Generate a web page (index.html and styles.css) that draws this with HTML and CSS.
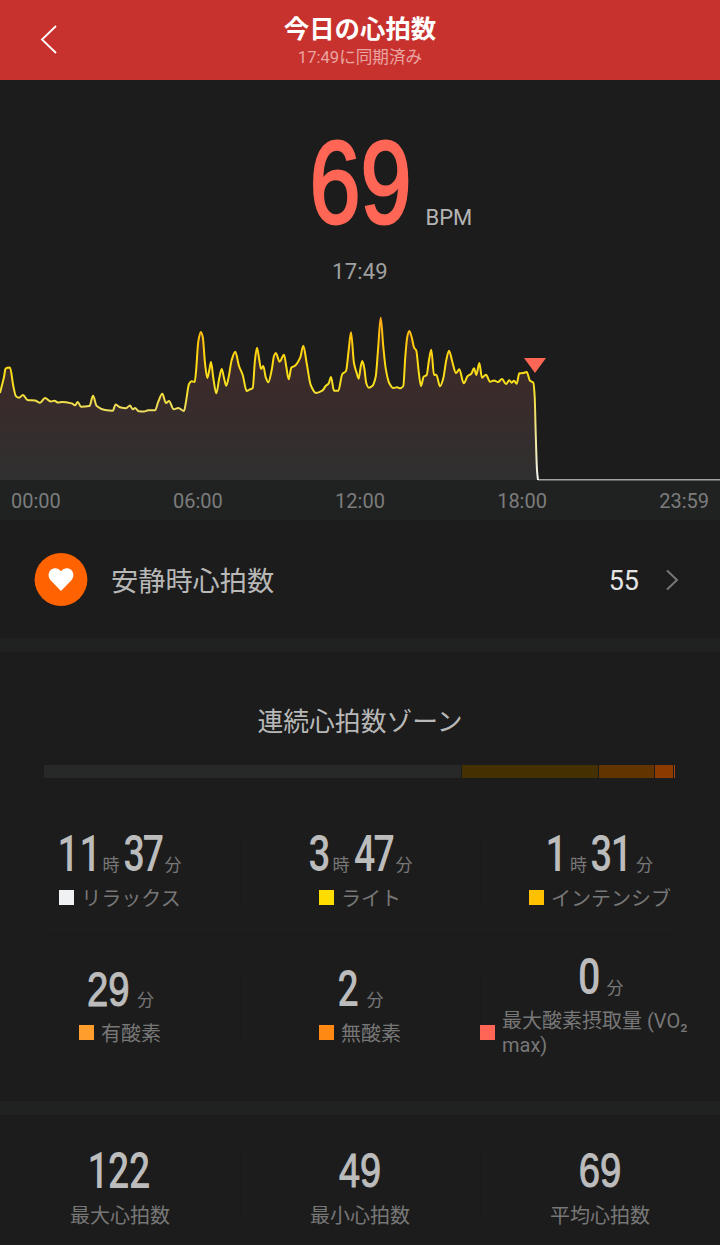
FILE: index.html
```html
<!DOCTYPE html>
<html lang="ja">
<head>
<meta charset="utf-8">
<title>今日の心拍数</title>
<link rel="stylesheet" href="styles.css">
</head>
<body>
<header class="topbar">
  <svg class="back" width="18" height="30" viewBox="0 0 18 30"><path d="M16 2 2 15.5 16 29"/></svg>
  <div class="heading">
    <h1>今日の心拍数</h1>
    <p>17:49に同期済み</p>
  </div>
</header>

<section class="current">
  <div class="reading">
    <svg class="num round" width="100" height="87"><text transform="translate(-1.5 85.2) scale(.785 1)">69</text></svg>
    <span class="bpm">BPM</span>
  </div>
  <div class="read-time">17:49</div>
  <svg class="chart" width="720" height="180" viewBox="0 301 720 180">
    <defs>
      <linearGradient id="line" gradientUnits="userSpaceOnUse" x1="0" y1="317" x2="0" y2="480">
        <stop offset="0" stop-color="#ffa51c"/><stop offset=".13" stop-color="#ffc60c"/>
        <stop offset=".25" stop-color="#ffd910"/><stop offset=".42" stop-color="#f6df20"/>
        <stop offset=".58" stop-color="#eddd62"/><stop offset="1" stop-color="#f4f4f4"/>
      </linearGradient>
      <linearGradient id="area" gradientUnits="userSpaceOnUse" x1="0" y1="320" x2="0" y2="480">
        <stop offset="0" stop-color="#422a2a"/><stop offset=".5" stop-color="#392b2b"/><stop offset="1" stop-color="#303030"/>
      </linearGradient>
    </defs>
    <path id="areaPath" fill="url(#area)"/>
    <path d="M538 479.7H720" stroke="#a2a3a3" stroke-width="1.6"/>
    <path id="linePath" fill="none" stroke="url(#line)" stroke-width="2" stroke-linejoin="round"/>
    <path d="M524 358h22l-11 15z" fill="#ff6655"/>
  </svg>
</section>
<div class="axis"><span>00:00</span><span>06:00</span><span>12:00</span><span>18:00</span><span>23:59</span></div>

<section class="resting">
  <svg width="54" height="54" viewBox="0 0 54 54"><circle cx="27" cy="26.5" r="26.4" fill="#ff6200"/><path d="M27 38 16.8 27.4C13.7 24.2 14 19.2 17 16.7c3-2.4 7.300-2 10 1.600 2.700-3.600 7-4 10-1.600 3 2.500 3.300 7.500.2 10.700z" fill="#fff"/></svg>
  <span class="resting-label">安静時心拍数</span>
  <span class="resting-value">55</span>
  <svg class="more" width="14" height="22" viewBox="0 0 14 22"><path d="M2 1.500 12 11 2 20.500"/></svg>
</section>

<section class="zones">
  <h2>連続心拍数ゾーン</h2>
  <div class="bar"><i class="b1"></i><i class="b2"></i><i class="b3"></i><i class="b4"></i><i class="b5"></i></div>
  <div class="grid first">
    <div class="cell">
      <div class="time"><svg class="num" width="44" height="36"><text x="0 29.3" transform="translate(-1.500 36) scale(.75 1)">11</text></svg><span>時</span><svg class="num next" width="42" height="36"><text x="0 26" transform="translate(.5 36) scale(.74 1)">37</text></svg><span>分</span></div>
      <div class="label"><i class="relax"></i><span>リラックス</span></div>
    </div>
    <div class="cell">
      <div class="time"><svg class="num" width="25" height="36"><text transform="translate(.5 36) scale(.76 1)">3</text></svg><span>時</span><svg class="num next" width="43" height="36"><text x="0 26.5" transform="translate(1 36) scale(.74 1)">47</text></svg><span>分</span></div>
      <div class="label"><i class="light"></i><span>ライト</span></div>
    </div>
    <div class="cell">
      <div class="time"><svg class="num" width="23" height="36"><text transform="translate(-1.500 36) scale(.75 1)">1</text></svg><span>時</span><svg class="num next" width="46" height="36"><text x="0 27" transform="translate(.5 36) scale(.75 1)">31</text></svg><span>分</span></div>
      <div class="label"><i class="intense"></i><span>インテンシブ</span></div>
    </div>
  </div>
  <div class="rule"></div>
  <div class="grid second">
    <div class="cell">
      <div class="time"><svg class="num round" width="51" height="36"><text transform="translate(1 35.500) scale(.78 1)">29</text></svg><span>分</span></div>
      <div class="label"><i class="aerobic"></i><span>有酸素</span></div>
    </div>
    <div class="cell">
      <div class="time"><svg class="num" width="30" height="36"><text transform="translate(.5 36) scale(.74 1)">2</text></svg><span>分</span></div>
      <div class="label"><i class="anaerobic"></i><span>無酸素</span></div>
    </div>
    <div class="cell">
      <div class="time"><svg class="num" width="30" height="36"><text transform="translate(1 36) scale(.78 1)">0</text></svg><span>分</span></div>
      <div class="label wide"><i class="vo2"></i><span>最大酸素摂取量 (VO₂<br>max)</span></div>
    </div>
  </div>
</section>

<section class="stats">
  <div><svg class="num" width="60" height="36"><text x="0 28 56.300" transform="translate(-2.600 35.500) scale(.74 1)">122</text></svg><span>最大心拍数</span></div>
  <div><svg class="num round" width="42" height="36"><text transform="translate(0 34.800) scale(.77 1)">49</text></svg><span>最小心拍数</span></div>
  <div><svg class="num round" width="42" height="36"><text transform="translate(-.3 34.800) scale(.78 1)">69</text></svg><span>平均心拍数</span></div>
</section>
<script src="chart.js"></script>
</body>
</html>
```
FILE: styles.css
```css
* { box-sizing: border-box; }
body {
  margin: 0;
  width: 720px;
  background: #1c1c1c;
  color: #b8b8b8;
  font-family: Roboto, "Noto Sans CJK JP", sans-serif;
}
h1, h2, p { margin: 0; }
svg { display: block; flex: none; }

.topbar {
  height: 80px;
  background: #c8322e;
  display: grid;
  grid-template-columns: 40px 1fr 40px;
  color: #fff;
}
.back { justify-self: end; margin: 24px -18px 0 0; fill: none; stroke: #fff; stroke-width: 1.8; }
.heading { text-align: center; padding-top: 13px; }
.heading h1 { font-size: 25.4px; line-height: 32px; font-weight: 700; }
.heading p { font-size: 16.6px; line-height: 24px; color: #eaa5a2; margin-top: 1px; }

.num { overflow: visible; fill: #bcbcbc; font-size: 50.6px; font-weight: 500; }
.num.round {
  stroke: #bcbcbc;
  stroke-width: 1.1;
  font-family: "Liberation Sans", Arial, sans-serif;
  font-size: 49px;
  font-weight: 400;
}

.current { height: 400px; display: flex; flex-direction: column; }
.reading {
  display: flex;
  align-items: baseline;
  margin: 58px 0 0 311px;
  height: 88px;
}
.reading .num.round { fill: #ff6655; stroke: #ff6655; stroke-width: 2.8; font-size: 117px; }
.bpm { font-size: 22px; line-height: 26px; margin-left: 14.5px; color: #b4b4b4; }
.read-time { margin-top: 32px; text-align: center; font-size: 22px; line-height: 28px; color: #a0a0a0; letter-spacing: .2px; }
.chart { margin-top: 15px; }

.axis {
  height: 40px;
  padding: 1px 11px 0;
  background: #202222;
  color: #7c7c7c;
  font-size: 20px;
  display: flex;
  justify-content: space-between;
  align-items: center;
}

.resting { height: 118px; padding: 1px 41px 0 34px; display: flex; align-items: center; }
.resting-label { font-size: 27.2px; margin-left: 23px; line-height: 36px; padding-top: 4px; }
.resting-value { font-size: 27px; margin-left: auto; color: #e4e4e4; padding-top: 3px; }
.more { margin-left: 26px; fill: none; stroke: #777; stroke-width: 2; }

.zones { height: 477px; border-top: 14px solid #202222; border-bottom: 14px solid #202222; }
.zones h2 { margin-top: 52px; text-align: center; font-size: 25.8px; line-height: 36px; font-weight: 400; }
.bar { display: grid; grid-template-columns: 417px 136px 55px 18px 1px; gap: 1px; width: 631px; height: 13px; margin: 25px 0 0 44px; }
.b1 { background: #262928; }
.b2 { background: #443000; }
.b3 { background: #623500; }
.b4 { background: #8c3a00; }
.b5 { background: #aa4310; }
.grid { display: grid; grid-template-columns: repeat(3, 240px); align-items: center; }
.first { height: 83px; margin-top: 53px; }
.second { height: 130px; margin-top: 7px; }
.rule { height: 1px; margin: 20px 48px 0; background: #191919; }
.cell { display: flex; flex-direction: column; align-items: center; }
.cell + .cell { background: linear-gradient(#191919, #191919) left center / 1px 64px no-repeat; }
.time { display: flex; align-items: baseline; height: 39px; }
.time span { font-size: 17px; line-height: 20px; color: #777; }
.time .next { margin-left: 3px; }
.label { display: flex; align-items: center; gap: 7px; margin-top: 12px; font-size: 20px; line-height: 24px; color: #777; }
.label i { width: 15px; height: 15px; flex: none; }
.label span { padding-top: 1px; margin-bottom: -1px; }
.wide { align-self: stretch; }
.wide span { padding-top: 0; margin-bottom: 0; }
.first .label i { margin-bottom: 2px; }
.relax { background: #f0f1f2; }
.light { background: #ffdc00; }
.intense { background: #ffc000; }
.aerobic { background: #ff9e2c; }
.anaerobic { background: #ff8912; }
.vo2 { background: #ff6655; }

.stats { height: 130px; display: grid; grid-template-columns: repeat(3, 240px); padding-top: 37px; }
.stats div { display: flex; flex-direction: column; align-items: center; height: 66px; }
.stats div + div { background: linear-gradient(#191919, #191919) left center / 1px 64px no-repeat; }
.stats span { font-size: 20px; line-height: 24px; margin-top: 16px; color: #777; }
```
FILE: chart.js
```js
// Heart-rate samples as x,y pairs in chart coordinates.
const samples = `0,393 4,377 5.5,369 7.3,367.8 10,367.5 13.3,386 16,396.3 19,397.7 23,395 27.5,400 35,400.5 40,402.7 45,398
50.7,401.5 54.5,400.7 58,402.6 62,402 71.7,403.4 75,405.3 77.7,402 81,406.7 89.5,406 93,395.8 96.7,406 105,410 112.7,410.8
115.7,404.5 120,407.3 126,408.3 130,405.5 132.7,409.3 135,408 138.7,411.3 144,411.6 148.3,410.3 155,410.3 158.3,401.7
162.3,393.8 166,403 169,401 173.7,409.3 178.3,408 184,411 186,401.7 189,384 191.7,381.3 194.7,382 196,371.7 198.3,341.7
200.7,332 202.7,336.7 205,363 207.3,378 209.3,370 211,362 213.3,378 216.3,393.3 219.3,378 221.7,369 224,378 226.3,385.7
228.7,376.7 231.7,360 235.3,351.7 239,366 242.7,375 246.7,391 250,389.3 252.7,388 255,360 257,347.7 259.3,360 261,369
263.3,366 265.7,377.3 268.3,382.3 271.7,370 274,356 275.7,353 279.7,361.7 284,354.7 286.3,366.7 288.7,379.3 291.3,367.7
295,365.7 300.3,357.3 303.3,345.7 306.7,363.3 310.7,385 316,393 322.3,390.7 325.7,386 328.7,383.3 331,377 334,390.7
338.3,390.7 342.3,374 346,371 348.7,350 351,332.3 354,363.3 356.7,373 358.7,378.7 360.7,366.7 362.3,361 364.3,368.3
366.3,383.3 368.7,387.7 372.3,386 375.7,376.7 378,350 380.7,317.7 383.3,346.7 385.7,368.3 389.3,383.3 393.3,388 397.3,387.3
400,388.3 403.3,386 405.3,356.7 407.3,336.7 409.3,331 411.7,337.3 414,347.3 416.3,350.7 418.7,371.7 421,386 423.7,376.7
426.7,375 429,360 431.3,349.7 434,375 436.3,374.7 440,386.3 443.3,378.3 446.3,360 449,350.7 452.3,361.7 456,373 459.3,369.3
463.7,383.3 467.7,376 471.3,373.7 474,368.3 476.3,375 479.3,363 482,377.7 486,374.7 490,381.7 494,380.5 498,382 502,379
506,384 509.3,380.3 511.7,382.7 514,380.7 516.7,383.7 519.3,373.3 523.3,373 526.7,372 530,380.7 533.3,382.7 534.7,396.7
535.7,433 537,470 538,480`.split(/\s+/).map(p => p.split(',').map(Number));

// Monotone cubic smoothing: the curve never overshoots a sample.
const slopes = samples.slice(1).map((p, i) => (p[1] - samples[i][1]) / (p[0] - samples[i][0]));
const tangents = samples.map((_, i) => {
  const a = slopes[i - 1], b = slopes[i];
  if (a === undefined) return b;
  if (b === undefined) return a;
  return a * b <= 0 ? 0 : 2 * a * b / (a + b);
});
let d = `M${samples[0]}`;
for (let i = 1; i < samples.length; i++) {
  const [x0, y0] = samples[i - 1], [x1, y1] = samples[i], h = (x1 - x0) / 3;
  d += `C${x0 + h},${y0 + tangents[i - 1] * h} ${x1 - h},${y1 - tangents[i] * h} ${x1},${y1}`;
}
document.getElementById('linePath').setAttribute('d', d);
document.getElementById('areaPath').setAttribute('d', d + 'L0,480Z');
```
